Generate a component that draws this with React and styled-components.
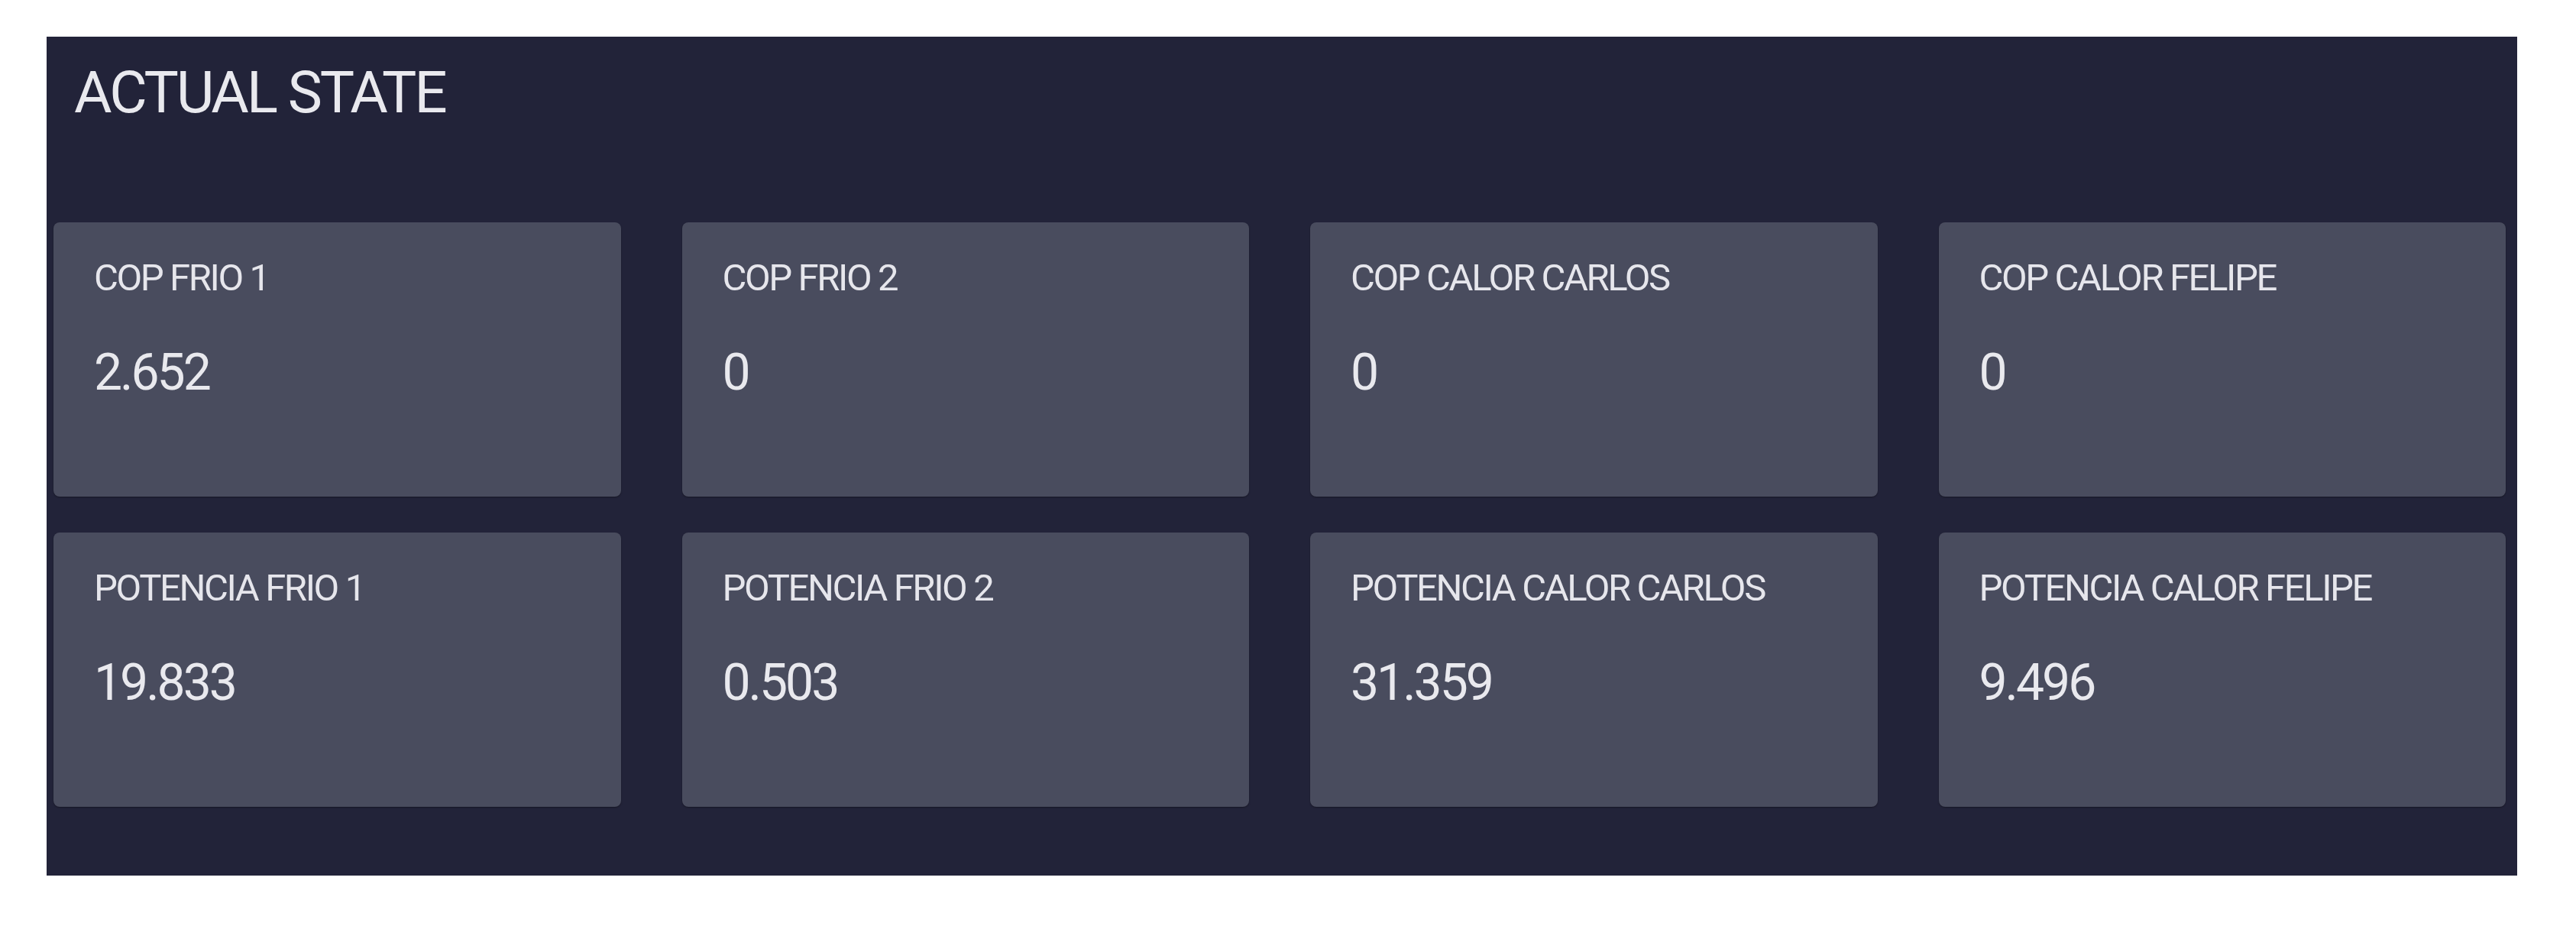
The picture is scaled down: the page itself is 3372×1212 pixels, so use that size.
import styled, { createGlobalStyle } from "styled-components";

const GlobalStyle = createGlobalStyle`
  body {
    margin: 0;
    background: #ffffff;
    font-family: Roboto, "Noto Sans", sans-serif;
  }
`;

const metrics = [
  { label: "COP FRIO 1", value: "2.652" },
  { label: "COP FRIO 2", value: "0" },
  { label: "COP CALOR CARLOS", value: "0" },
  { label: "COP CALOR FELIPE", value: "0" },
  { label: "POTENCIA FRIO 1", value: "19.833" },
  { label: "POTENCIA FRIO 2", value: "0.503" },
  { label: "POTENCIA CALOR CARLOS", value: "31.359" },
  { label: "POTENCIA CALOR FELIPE", value: "9.496" },
];

const App = () => {
  return (
    <>
      <GlobalStyle />
      <Page>
        <Panel>
          <Title>ACTUAL STATE</Title>
          <Grid>
            {metrics.map((m) => (
              <Card key={m.label}>
                <Label>{m.label}</Label>
                <Value>{m.value}</Value>
              </Card>
            ))}
          </Grid>
        </Panel>
      </Page>
    </>
  );
};

export default App;

const Page = styled.div`
  padding: 48px 0 0 61px;
`;

const Panel = styled.section`
  width: 3234px;
  height: 1098px;
  box-sizing: border-box;
  background: #222339;
  padding: 35px 15px 90px 9px;
`;

const Title = styled.h1`
  margin: 0 0 132px 27px;
  font-size: 76px;
  line-height: 1;
  font-weight: 400;
  color: #e9e9ee;
  letter-spacing: -3px;
`;

const Grid = styled.div`
  display: grid;
  grid-template-columns: repeat(4, 1fr);
  column-gap: 80px;
  row-gap: 47px;
`;

const Card = styled.div`
  height: 359px;
  box-sizing: border-box;
  padding: 48px 53px 0;
  background: #494c5e;
  border-radius: 8px;
  box-shadow: 0 1px 2px rgba(0, 0, 0, 0.35);
`;

const Label = styled.div`
  font-size: 49px;
  line-height: 1;
  color: #e6e6ec;
  letter-spacing: -2.4px;
`;

const Value = styled.div`
  margin-top: 67px;
  font-size: 66px;
  line-height: 1;
  color: #e9e9ee;
  letter-spacing: -3px;
`;
